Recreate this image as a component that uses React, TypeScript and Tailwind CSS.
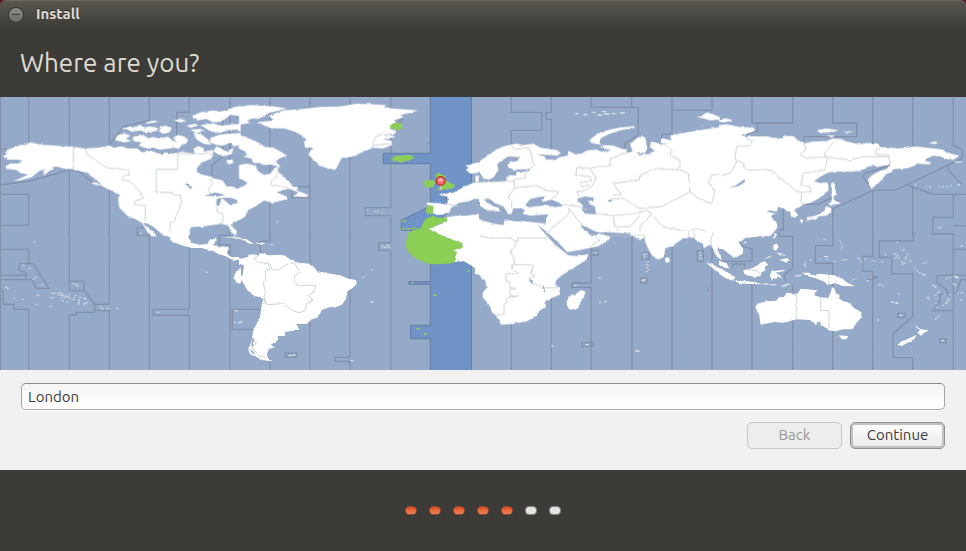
import { useState } from "react";

type Sheet = {
  x: number;
  y: number;
  zones: string;
  land: string;
  water?: string;
  borders?: string;
  islands?: string;
};

// The world is split in 4x2 sheets, each with its own origin
const SHEETS: Sheet[] = [
  // Alaska, Canada, USA
  {
    x: 0,
    y: -6,
    zones:
      "M1,0V420 M86,0V145 M208,0V420 M328,280V420 M448,0V76L370,95L328,150V0 M568,0V52H530V126 M690,0V200 M0,165L20,160 M0,270L90,258L210,224L240,232L280,265L350,290 M0,298H86V391H0 M412,420V398H440 M668,40V185L636,210V245",
    land:
      "M8,183L22,178L15,172L22,165L40,158L62,150L88,150L72,146L98,142L110,147L140,150L178,153L215,154L256,161L300,157L328,151L340,158L366,154L382,160L412,160L428,172L452,168L490,180L492,172L520,176L545,170L584,176L580,160L592,154L610,158L612,170L638,165L640,176L632,192L605,202L592,218L590,230L604,238L634,245L640,250L668,256L680,274L702,276L710,282L723,278V372L700,384L694,392L710,408L708,422L694,412L685,392L665,386L640,390L610,394L575,396L568,408V423H492L460,395L435,382L430,386L462,414L468,423H452L438,405L426,384L405,372L382,362L358,338L354,310L360,298L335,288L285,264L305,270L290,255L258,232L212,222L196,222L172,215L158,216L160,224L150,226L140,234L132,242L130,228L140,222L118,228L96,246L60,256L40,258L66,248L84,238L60,234L50,225L20,222L16,214L30,206L55,205L66,198L55,194L22,194Z M345,135L350,122L372,116L392,122L378,132L395,138L372,142Z M398,126L430,120L444,130L460,126L480,132L502,124L520,138L545,150L540,158L510,160L480,164L460,158L440,160L415,152L425,142L400,138Z M362,102L390,94L400,98L420,90L432,98L450,94L475,100L470,108L440,112L420,106L395,110L380,102Z M436,82L465,76L475,80L445,86Z M480,96L496,92L515,98L508,112L490,116L478,108Z M520,128L534,120L552,124L565,134L558,146L540,150L530,142Z M570,104L600,102L615,108L590,114Z M522,76L540,72L560,78L540,82Z M575,64L600,52L640,46L660,50L700,38L722,32V62L690,60L676,72L660,80L640,82L620,72L590,76Z M600,90L640,85L660,92L722,86V106L690,104L660,114L630,108Z M560,92L585,86L595,92L570,98Z M580,112L604,118L622,132L634,150L610,146L590,134Z M630,130L660,118L722,114V150L702,154L690,142L670,152L650,150L630,142Z M640,166L650,154L664,160L680,172L700,156L696,176L670,184L650,176Z M678,196L696,193L702,202L685,208Z M275,262L290,262L300,272L285,270Z M344,288L366,294L370,302L350,296Z",
    water:
      "M555,265L565,266L577,279L572,283L562,274Z M612,302L645,292L676,300L655,304Z M650,312L665,308L662,320L656,334L648,328Z M665,308L690,308L710,314L714,324L692,328L678,320Z",
    borders:
      "M220,154V222 M256,161L262,178L300,205L320,218L388,225V240L368,242L366,255L390,258L415,285L432,308L405,318L403,328L436,332V380 M638,176H533V223H469V292H516L520,300H540L545,325L530,355L522,382H510V410 M630,250L638,265L625,280L632,298 M650,335L652,350L668,356V390 M90,142L110,146",
  },
  // Eastern Canada, Greenland, western Europe
  {
    x: 720,
    y: -6,
    zones:
      "M90,0V420 M210,0V420 M330,0V420 M452,0V338H376V362H452V420 M155,275H210V308H155Z",
    land:
      "M-3,210L20,206L45,210L55,230L72,240L90,236L105,218L112,216L120,235L150,262L158,275L176,276L170,286L205,300L200,306L160,304L175,292L150,282L132,284L110,292L142,305L142,312L98,324L72,316L45,335L25,345L15,365L-3,375V278L15,272L22,262L-3,250Z M-3,120L30,132L60,145L75,156L100,158L122,170L142,182L118,190L108,200L122,220L98,208L70,210L60,204L40,204L34,190L10,185L22,176L-3,160Z M-3,36L30,30L100,34L142,40L110,48L80,56L72,66L40,70L20,76L30,84L-3,90Z M50,82L102,76L86,62L130,46L190,42L240,36L300,34L350,26L440,30L430,36L456,40L535,46L510,54L480,60L490,66L462,76L470,84L455,88L450,102L470,108L462,118L440,116L468,126L430,132L455,138L455,150L430,160L400,158L370,170L345,182L322,188L306,188L295,208L288,222L275,225L240,212L220,195L205,178L212,165L222,160L195,154L192,140L200,135L186,122L165,110L130,100L95,100Z M723,200L690,208L676,212L686,218L678,224L690,236L712,234L723,228Z M705,245L714,240L718,258L708,262Z M723,262L702,262L680,272L660,282L648,290L630,295L600,296L598,300L622,304L624,318L620,326L580,324L562,322L560,330L580,334L578,354L590,360L610,358L630,350L634,338L650,328L664,322L690,318L700,312L723,312Z M565,402L620,380L622,366L650,362L680,362L723,356V423H603Z",
    borders:
      "M115,225L110,245L92,260L95,272L125,272L150,282 M455,118L410,122L400,140L398,152L450,145 M620,325L655,335",
    islands: "M380,345h3 M404,349h3 M412,349h4 M426,353h3 M110,381h4",
  },
  // Europe, central Asia
  {
    x: 1440,
    y: -6,
    zones:
      "M94,0V52H186V106H94V150 M214,0V52H198V73H214V165 M333,0V37H475V120L435,145V162 M455,0V37 M576,0V118H545V130 M576,46H696V0",
    land:
      "M-3,200L20,185L50,162L80,152L110,146L130,150L160,146L180,158L230,165L243,175L230,184L205,180L200,192L215,192L240,186L262,182L268,168L285,178L305,176L320,166L350,164L362,170L395,165L360,158L372,150L400,152L428,162L440,162L438,174L458,170L450,148L470,130L488,122L498,136L540,146L545,130L575,135L570,122L620,112L680,102L723,96V423H-3Z M328,136L350,118L380,106L420,98L462,93L465,98L420,106L385,118L362,130L358,144L370,150L335,144Z M648,66L662,64L680,52L700,58L720,66V74L690,76L670,70Z",
    water:
      "M-3,228L10,250L28,254L42,246L50,232L56,225L50,210L62,198L85,184L118,186L112,198L88,202L84,218L100,224L150,222L145,230L110,230L108,242L90,240L80,246L78,258L50,260L-3,262Z M172,178L215,180L240,184L228,194L196,194L190,184Z M136,330L150,312L175,306L195,304L192,312L180,314L190,320L215,314L240,324L248,334L225,336L200,330L170,334L145,336Z M290,312L315,304L340,308L342,316L325,318L330,328L345,334L348,358L315,356L306,345L308,332Z M383,318L390,313L398,317L390,321Z M-3,330L20,345L62,350L55,340L20,322L12,312L30,312L45,324L70,334L76,344L85,358L95,356L100,340L125,340L135,346L128,356L150,362L204,358L196,386L165,382L130,378L110,380L75,374L70,390L40,386L20,380L-3,372Z M172,390L182,396L216,423H200Z M300,390L315,394L335,404L352,412L400,413L450,416L455,423H330L318,412Z M506,126L514,134L510,156L522,166L512,176L480,180L470,172L495,174L502,160L498,140Z M520,132L545,142L535,140L560,150L540,148Z",
    borders:
      "M95,152L105,165L130,158L150,160L158,200L165,210L135,228V250L105,252L100,262 M0,262L100,258L105,280L90,295L85,310L95,320V345 M105,278L170,272L205,288L235,290L232,300L215,308 M440,162V172L390,192V213L350,215L330,222L340,235L348,250L335,275L305,290H290L300,308 M330,220L290,218L288,240L330,245L335,258L300,262L305,275L330,270 M400,265L478,255L480,240L530,220L600,225L625,235L630,290L545,335L480,340L430,310L395,312M400,265L410,280L425,298L400,300 M630,290L655,310L695,325L705,290L685,262L695,240L720,238 M560,150L575,165L570,180L600,195V215L590,222 M245,328L300,335L320,345 M265,340L268,355L240,380L218,395L200,415 M268,340L290,370L310,392 M345,355L400,362L435,358L470,355L500,345L515,355 M400,365L405,395L450,395L480,360 M410,400L420,415 M515,355L500,375L480,395V415 M520,365L550,395L620,410L650,400L680,410",
    islands:
      "M285,56h10 M310,59h12 M338,52h8 M352,60h14 M366,50h12 M372,57h16 M395,56h12 M420,54h14 M665,93h3",
  },
  // Siberia, China, Japan
  {
    x: 2160,
    y: -6,
    zones:
      "M96,0V84H218V0 M113,84V108L60,122 M338,0V84H410V125H251V140 M458,0V150 M578,0V155 M700,0V150L727,165V190L525,286H458L428,245L435,235L512,210 M458,286L338,342V420 M365,322L330,310L295,328H250 M190,342V405H175 M458,286V420 M560,268L638,298H738 M578,275V420 M685,206V225L725,268 M700,298V367H638V416H700 M738,392H700",
    land:
      "M-3,90L20,88L60,96L100,98L106,106L88,114L60,120L80,124L140,124L160,128L188,130L190,122L222,124L232,136L250,140L252,146L275,140L320,138L340,130L365,132L380,140L420,148L440,144L475,146L480,156L505,158L540,160L590,155L640,160L668,164L682,174L718,182L700,194L680,192L660,184L640,182L618,190L615,198L632,202L630,208L590,206L585,212L560,220L520,222L514,232L500,236L478,262L455,280L445,270L444,252L460,238L480,228L500,222L510,208L480,214L460,212L440,216L432,226L405,230L350,230L328,232L308,240L282,258L300,264L322,262L326,275L325,286L300,308L275,322L250,328L232,340L222,348L232,355L228,368L212,364L212,352L200,350L195,340L175,338L170,350L150,346L138,350L168,356L152,364L170,382L172,398L158,415L150,423H-3Z M332,265L342,262L344,275L350,300L342,302L340,318L334,300L336,285Z M325,325L333,322L336,310L352,320L365,324L345,328L330,332Z M320,335L330,338L334,350L320,362L295,364L290,372L270,374L258,378L262,366L290,362L300,354L312,348Z M238,376L250,372L246,386Z M290,106L320,100L356,106L335,112L300,114Z M368,108L403,110L383,113Z M318,120L345,122L335,127Z M628,144L643,139L658,142L643,147Z M-3,75L15,70L40,76L15,82L-3,80Z",
    water: "M28,278L55,266L75,252L74,262L55,273Z",
    borders:
      "M75,120L85,135L98,138L90,152L50,155L45,190L50,200L40,220L30,235L0,242 M50,195L70,205L78,225L120,225L150,222L175,245L205,268L225,285L245,292L242,320L250,326 M245,292L275,290L270,275L242,270L250,235L315,225L322,190L312,178L325,160L345,138 M322,186L390,195L430,185H505L512,208 M252,146L258,165L240,178L260,190L320,185 M480,160L468,165V178L510,182",
    islands:
      "M584,271h4 M617,275h3 M628,277h5 M656,275h4 M666,276h4 M680,275h4 M690,272h5 M712,270h8 M705,201h20 M655,398h8",
  },
  // Pacific, Mexico
  {
    x: 0,
    y: 405,
    zones:
      "M1,0V414 M0,52H86V95 M58,95H100L146,169H108L98,143H0 M58,95V115L78,122V143 M0,130H78 M0,176H9V217H42V232H86V414 M208,0V176H252V148H208 M252,176L284,216V241H229V249H208V414 M284,217H328V0 M284,236H328V414 M412,0V10H448V414 M448,0V10 M568,0V232H460V250H568V414 M690,38V414 M690,38H658V10H690V0 M697,232H720 M697,232V292H720",
    land:
      "M478,-3L505,14L508,22L525,32L545,40L575,48L605,48L640,58L655,66L676,72L690,80L700,86L723,82L718,75L695,76L682,66L686,46L655,42L638,40L650,26L646,20L630,22L622,36L600,38L575,32L565,15L570,-3Z M450,-3L456,6L472,14L465,6L460,-3Z M672,16L702,13L723,17V21L700,17Z M723,105L705,125L700,140L710,152L723,155Z M694,-3H710L706,5Z",
    islands:
      "M102,29h4 M420,5h5 M68,100h5 M86,109h5 M105,136h5 M98,142h4 M125,159h4 M16,166h5 M21,169h5 M218,155h4 M225,158h5 M231,161h5 M110,188h4 M114,191h4 M40,199h4 M66,203h4 M107,217h4 M150,223h4 M150,197h4 M157,198h4 M154,184h6 M162,184h4 M172,186h4 M176,182h5 M183,185h6 M178,190h5 M186,191h5 M195,190h4 M192,195h5 M200,194h6 M182,197h4 M206,188h3 M208,198h4 M187,207h4 M200,210h4 M218,203h5 M225,190h4 M222,197h3 M238,196h4 M234,204h5 M234,211h5 M234,216h4 M250,200h8 M251,214h5 M258,212h5 M252,219h3 M300,226h5 M306,231h4 M320,229h5 M348,229h6 M472,241h5 M618,121h5 M704,236h10 M702,272h5 M714,272h6",
  },
  // South America, Atlantic
  {
    x: 720,
    y: 405,
    zones:
      "M0,232H60 M0,292H40 M90,0V28H60L62,70 M90,380V414 M210,0V100 M210,260V414 M330,0V376H285V388H330V414 M452,0V32H416V55H452V414 M136,364H169V376H136Z",
    land:
      "M-3,82L12,78L28,68L45,66L55,72L60,64L75,66L85,70L120,68L140,72L152,85L175,92L210,95L222,106L235,122L245,120L270,125L300,130L325,140L348,144L350,156L335,170L322,178L318,200L306,218L290,224L268,226L245,234L240,245L228,258L215,262L200,276L168,276L178,288L160,296L135,300L132,312L112,312L118,318L105,332L92,336L102,346L86,352L80,368L86,382L98,388L70,385L48,374L30,366L25,350L34,330L40,295L50,275L60,258L64,225L70,200L40,190L22,175L8,150L-3,135L8,130L12,100L-3,95Z M0,20L20,22L42,36L25,34Z M46,33L60,30L76,34L65,38Z M92,36h10v2h-10Z M583,-3L640,25L666,32L668,45L640,55L652,62L645,70L648,90L672,88L690,98L705,108V125L723,130V-3Z",
    water: "M120,312L124,316L118,322L116,316Z M36,318L44,322L38,332L44,340L34,344Z M30,350L40,358L44,368L36,364Z",
    borders:
      "M55,70L42,80L52,90L85,95L90,112L75,115L78,145L70,150L76,185L72,195L80,218L130,215L162,238L180,242L195,235L200,215L220,205L205,190L222,180L228,160H175L160,148L165,132L178,122L165,95L150,92M90,95L95,112L115,115L128,105L145,95 M70,200L80,218 M40,320L48,335L35,345L48,360L60,372L80,378",
    islands:
      "M425,43h4 M432,46h6 M444,47h5 M440,41h8 M393,113h4 M368,136h5 M392,210h9 M146,370h8 M157,369h8 M332,386h8 M0,272l6,-4",
  },
  // Africa, Indian Ocean
  {
    x: 1440,
    y: 405,
    zones:
      "M94,270V414 M214,190V414 M333,40V153H275V166H333V414 M333,55H355V69H333 M456,0V414 M576,30V414 M696,40V414 M485,62H508V82H485Z M482,139H500V154H482Z M652,56H670V88H652Z M305,332H340V343H305Z M685,169H694V175H685Z",
    land:
      "M-3,-3H188L210,22L228,40L255,62L265,70L290,72L326,66L318,84L280,108L245,130L228,145L226,158L240,168L240,188L215,198L195,208L198,226L178,234L172,250L140,268L95,276L62,278L60,266L48,250L38,244L25,215L8,196L8,182L20,168L16,145L-3,132Z M202,-3L262,60L310,52L355,42L385,25L392,15L370,8L355,4L345,10L328,8L322,-3Z M440,-3L456,2L468,8L462,14L480,24L492,16L500,40L512,65L528,80L538,82L552,72L555,50L580,40L608,20L640,16L652,28L668,34L672,48L690,38L698,48L706,66L723,84V-3Z M555,78L565,76L571,86L564,92L556,90Z M678,92L696,96L723,112V124L705,114Z M262,195L285,188L305,172L316,180L314,188L290,232L268,232L260,218Z",
    water:
      "M148,135L154,148L160,155L156,156L148,148Z M188,160L192,164L196,182L190,178Z M723,40L712,50L718,66L723,70Z",
    borders:
      "M0,12L30,18H90L108,28H112L113,18H208 M105,30V45L90,58L100,78L105,98H135M105,98L95,98V110L115,125H78V148L90,150V168H106V172H90V192H115L80,198V215H72V248H50 M135,98L160,100L152,125L165,130L150,140 M160,156L188,162 M192,168L235,166 M345,12L360,25L332,42 M456,10H495V28 M640,-3L645,18 M625,0L628,18 M700,0L692,25L695,45",
    islands:
      "M345,62h4 M283,160h6 M356,138h6 M357,212h6 M373,209h7 M214,342h6 M317,338h8 M466,357h12 M487,66h4 M492,72h4 M496,65h5 M490,79h3 M501,90h4 M498,97h4 M503,100h4 M499,107h4 M504,112h4 M499,119h4 M484,145h8 M490,143h6 M657,62h5 M659,70h4 M658,78h4 M665,80h3 M688,172h4",
  },
  // Oceania
  {
    x: 2160,
    y: 405,
    zones:
      "M38,108V96H74V108 M0,88H96V50L62,42V20 M178,0V13H218V110L192,128L198,155 M96,150V414 M218,160V414 M338,0V41H286V94H338V414 M458,0V73H428V118H458V414 M440,145L475,135H458 M580,0V27H478V76H515V125H578V254L519,305V377H578V414 M638,0V5H700V414 M700,52H738 M738,130H652V153L682,175V187H660V210L638,236H700 M738,143H722L710,182H700 M533,244H556V256H533Z M659,321H679V332H659Z",
    land:
      "M-3,-3H157L140,8L110,14L76,18L64,28L55,30L70,50L68,66L40,78L36,72L22,62L10,52L-3,50Z M70,32L80,28L78,36Z M158,16L165,3L171,8L162,20Z M-3,86L20,94L28,110L10,106L-3,98Z M-3,108L30,125L42,134L40,146L20,140L-3,125Z M42,148L70,146L105,150L128,157L90,156L60,154Z M70,115L85,112L105,106L122,92L134,88L145,98L135,104L136,116L125,120L122,132L104,134L80,130L72,124Z M150,128L156,118L195,113L190,118L166,122L180,130L188,140L174,132L168,142L160,138L156,146Z M160,40L170,34L176,44L168,56L160,52Z M170,60L184,66L180,72Z M178,84L204,78L208,86L200,92L190,88Z M130,82L155,70L150,76Z M245,122L268,122L274,130L300,125L340,130L368,140L382,152L405,163L370,162L345,154L322,158L315,150L285,138L262,132Z M388,146L415,138L400,144Z M106,225L112,215L140,208L168,206L180,195L192,195L200,182L228,186L240,175L242,170L262,172L292,175L282,190L302,196L325,198L332,182L336,165L344,170L348,185L358,188L362,204L385,212L405,230L424,240L424,256L410,272L396,292L370,292L345,298L325,295L310,282L290,278L270,264L230,262L190,272L160,270L122,278L118,252Z M356,310L384,312L378,322L366,322Z M584,278L594,284L602,292L626,295L610,304L604,312L592,302L600,294Z M590,308L582,322L560,334L545,342L532,338L550,326L575,316Z",
    water: "M288,272L298,268L304,278L294,284Z",
    borders:
      "M230,186V262 M302,196V236H327V295 M326,128V158 M80,112L110,116L122,125",
    islands:
      "M310,23h5 M358,26h3 M362,33h3 M365,40h3 M364,47h3 M360,53h2 M270,84h4 M298,80h4 M312,74h12 M320,82h4 M342,88h5 M366,84h6 M376,83h5 M255,92h4 M252,98h5 M254,104h4 M412,79h6 M420,84h3 M424,91h3 M433,82h4 M461,87h3 M484,90h4 M494,68h4 M530,31h4 M523,66h6 M530,72h5 M525,78h4 M535,79h4 M549,54h4 M560,67h5 M556,75h4 M553,80h4 M543,90h4 M547,96h4 M568,87h5 M553,93h4 M608,94h4 M616,91h4 M583,105h3 M585,112h3 M590,117h4 M597,122h4 M606,128h10 M722,42h6 M678,139h4 M686,136h4 M700,133h12 M706,137h10 M699,156h6 M705,160h4 M636,160h8 M644,165h5 M653,181h5 M672,187h5 M690,188h3 M712,182h4 M722,182h5 M720,204h5 M620,197h8 M625,203h3 M645,190h4 M646,200h4 M645,213h3 M648,226h4 M668,220h3 M682,202h8 M678,208h8 M675,214h6 M655,251h5 M648,257h4 M645,263h4 M513,210h8 M525,213h10 M535,186h4 M470,264h5 M538,250h8 M664,326h8 M130,156h16 M150,158h18 M185,162h14 M195,157h14 M225,132h10 M180,66h8 M188,70h8 M235,130h10 M475,158h8 M488,162h4 M440,146h6",
  },
];

const TOTAL_STEPS = 7;
const CURRENT_STEP = 5;

function TimezoneMap() {
  return (
    <svg
      viewBox="0 0 2898 819"
      className="block h-auto w-full bg-[#95a9c9]"
      role="img"
      aria-label="World map"
    >
      {/* roughens the coastlines */}
      <filter
        id="coast"
        filterUnits="userSpaceOnUse"
        x="0"
        y="0"
        width="2898"
        height="819"
        colorInterpolationFilters="sRGB"
      >
        <feTurbulence type="fractalNoise" baseFrequency="0.07" numOctaves="2" seed="4" result="noise" />
        <feDisplacementMap in="SourceGraphic" in2="noise" scale="7" xChannelSelector="R" yChannelSelector="G" />
      </filter>

      {SHEETS.map((s, i) => (
        <path
          key={i}
          d={s.zones}
          transform={`translate(${s.x} ${s.y})`}
          fill="none"
          stroke="#8391aa"
          strokeWidth="4"
        />
      ))}

      {/* selected time zone */}
      <g fill="#6f93c7" stroke="#657a9f" strokeWidth="3">
        <path d="M1291,-4V169H1150V200H1291V327L1204,370V400H1244L1291,390L1340,350V290H1414V-4Z" />
        <path d="M1291,500V554H1227V562H1291V685H1232V725H1291V822H1414V490Z" />
      </g>

      <g filter="url(#coast)">
        {SHEETS.map((s, i) => (
          <g key={i} transform={`translate(${s.x} ${s.y})`} fill="none">
            <path d={s.land} fill="#fff" />
            {s.water && <path d={s.water} fill="#95a9c9" />}
            {s.borders && <path d={s.borders} stroke="#cdd5d2" strokeWidth="3" strokeLinejoin="round" />}
          </g>
        ))}

        {/* countries in the selected zone */}
        <g fill="#8ccf56">
          <path d="M1170,86L1182,78L1208,78L1204,88L1206,94L1190,102L1186,94L1172,96Z" />
          <path d="M1158,178L1172,184L1178,178L1195,176L1236,174L1244,182L1230,190L1200,196L1172,190L1180,186Z" />
          <path d="M1306,234L1318,226L1324,234L1338,236L1334,246L1346,252L1352,260L1366,264L1360,274L1320,280L1310,277L1326,270L1314,264Z" />
          <path d="M1270,270L1274,252L1300,248L1306,256L1300,270L1274,272L1282,262Z" />
          <path d="M1282,324L1300,328L1298,350L1282,350L1278,340Z" />
          <path d="M1274,370L1296,356L1315,362L1338,360L1342,374L1320,380L1285,396L1303,405L1360,430L1386,437L1388,450L1360,460L1372,467L1365,475L1368,495L1340,500L1292,502L1265,493L1240,480L1220,455L1216,435L1224,408L1240,400L1262,394Z" />
        </g>
      </g>

      {SHEETS.map((s, i) => (
        <path
          key={i}
          d={s.islands}
          transform={`translate(${s.x} ${s.y})`}
          fill="none"
          stroke="#dfe5ea"
          strokeWidth="4"
        />
      ))}
      <path
        fill="#8ccf56"
        d="M1206,370h12v4h-12z M1206,393h8v6h-8z M1220,394h10v4h-10z M1234,392h12v4h-12z M1234,556h8v4h-8z M1301,592h8v5h-8z M1250,693h8v5h-8z M1272,709h8v5h-8z M1402,520h8v5h-8z"
      />
      <path d="M1194,72l16,-6M1196,78l14,-5M1280,138h10M1295,204h4M1341,215l6,-2" stroke="#7c8da0" strokeWidth="3" />

      {/* pin */}
      <rect x="1319" y="262" width="6" height="18" rx="3" fill="#c9cbc8" />
      <circle cx="1322" cy="252" r="13" fill="#f7636a" stroke="#b9322e" strokeWidth="4" />
      <ellipse cx="1322" cy="249" rx="7" ry="5" fill="#ffb4b6" />
    </svg>
  );
}

export default function App() {
  const [location, setLocation] = useState("London");

  return (
    <div className="flex min-h-screen flex-col bg-[#3c3b37] font-['Ubuntu','Noto_Sans',sans-serif] text-[#dfdbd2]">
      {/* title bar */}
      <div className="bg-[#5e1730]">
        <div className="flex h-7 items-center gap-3 rounded-t-md border-t border-[#6b6961] bg-linear-to-b from-[#59574f] to-[#3c3b37] px-2">
          <button
            aria-label="Minimize"
            className="flex size-4 items-center justify-center rounded-full border border-[#33322e] bg-linear-to-b from-[#8f8d86] to-[#6d6b65]"
          >
            <span className="h-px w-2 bg-[#3c3b37]" />
          </button>
          <span className="text-[15px] font-bold [text-shadow:0_-1px_0_#2c2b28]">Install</span>
        </div>
      </div>

      <h1 className="px-5 pt-4 pb-4 text-[26px] leading-[37px]">Where are you?</h1>

      <TimezoneMap />

      <div className="bg-[#f2f1f0] px-[21px] pt-[13px] pb-[21px] text-[15px] text-[#4c4c4c]">
        <input
          type="text"
          aria-label="Location"
          value={location}
          onChange={e => setLocation(e.target.value)}
          className="block h-[27px] w-full rounded-[5px] border border-[#a5a5a3] border-t-[#8b8b89] bg-linear-to-b from-[#f4f4f3] to-white px-1.5 text-[#3c3c3c] shadow-[0_1px_0_#fff] outline-none"
        />
        <div className="mt-3 flex justify-end gap-2">
          <button
            disabled
            className="h-[27px] w-[95px] rounded-[5px] border border-[#c8c7c6] bg-[#eeedec] text-[#9a9894]"
          >
            Back
          </button>
          <button className="h-[27px] w-[95px] rounded-[5px] border border-[#91918f] bg-linear-to-b from-[#fdfdfd] to-[#ebeae8] text-[#3c3c3c] shadow-[inset_0_0_0_2px_#c2c2c0]">
            Continue
          </button>
        </div>
      </div>

      {/* progress */}
      <div className="flex flex-1 items-center justify-center gap-3">
        {Array.from({ length: TOTAL_STEPS }, (_, i) => (
          <span
            key={i}
            className={
              i < CURRENT_STEP
                ? "h-[9px] w-3 rounded-[4px] border border-[#8a4c35] bg-linear-to-b from-[#dd4f1b] to-[#f08458]"
                : "h-[9px] w-3 rounded-[4px] border border-[#85847f] bg-[#e2e2e2]"
            }
          />
        ))}
      </div>
    </div>
  );
}
